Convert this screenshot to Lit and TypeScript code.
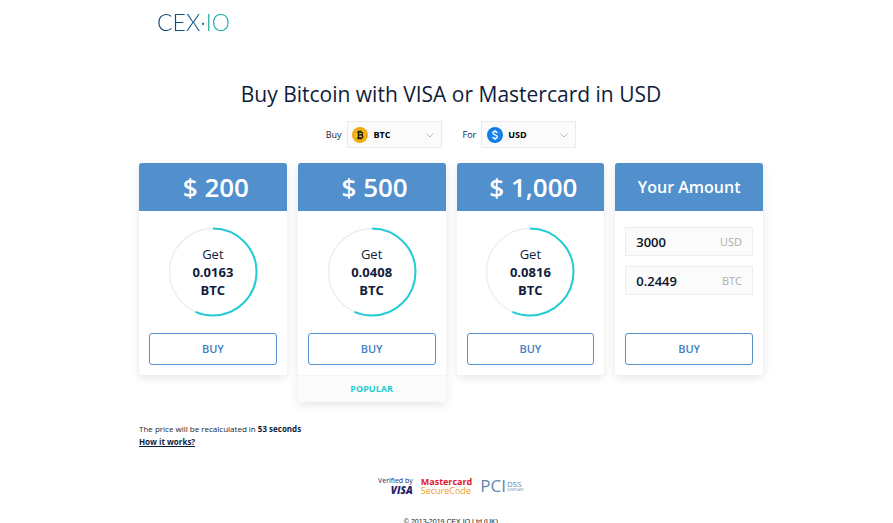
import { LitElement, html, css, svg } from "lit";
import { customElement, property, state } from "lit/decorators.js";

const RATE = 0.2449 / 3000;

@customElement("progress-ring")
class ProgressRing extends LitElement {
  @property({ type: Number }) value = 0;

  static styles = css`
    :host {
      display: grid;
      width: 90px;
      height: 90px;
    }
    .ring,
    .label {
      grid-area: 1 / 1;
    }
    .ring {
      width: 90px;
      height: 90px;
    }
    .track,
    .arc {
      fill: none;
    }
    .track {
      stroke: #ececec;
      stroke-width: 1.3;
    }
    .arc {
      stroke: #22ccd2;
      stroke-width: 2;
    }
    .label {
      align-self: center;
      text-align: center;
    }
  `;

  render() {
    return html`
      <svg class="ring" viewBox="0 0 90 90" aria-hidden="true">
        <circle class="track" cx="45" cy="45" r="43.5"></circle>
        <circle class="arc" cx="45" cy="45" r="43.5" pathLength="100"
          stroke-dasharray="${this.value} 100" transform="rotate(-90 45 45)"></circle>
      </svg>
      <div class="label"><slot></slot></div>
    `;
  }
}

@customElement("price-card")
class PriceCard extends LitElement {
  @property() heading = "";
  @property({ type: Boolean }) compact = false;
  @property({ type: Boolean }) popular = false;

  static styles = css`
    :host {
      display: block;
      border-radius: 3px;
      background: #fff;
      box-shadow: 0 3px 10px rgba(0, 0, 0, 0.1);
    }
    .head {
      display: flex;
      align-items: center;
      justify-content: center;
      height: 48px;
      margin: 0;
      padding-left: 6px;
      border-radius: 3px 3px 0 0;
      background: #5190cd;
      color: #fff;
      font-size: 26px;
      font-weight: 600;
    }
    .compact {
      padding-left: 0;
      font-size: 16px;
    }
    .body {
      display: flex;
      flex-direction: column;
      align-items: center;
      height: 122px;
      padding: 16px 10px 0;
      box-sizing: border-box;
    }
    .action {
      padding: 0 10px 10px;
    }
    .buy {
      width: 100%;
      height: 32px;
      padding: 0 0 1px;
      border: 1px solid #5190cd;
      border-radius: 3px;
      background: #fff;
      color: #4280c4;
      font: 600 11px "Open Sans", sans-serif;
      cursor: pointer;
    }
    .tag {
      border-top: 1px solid #f4f4f4;
      background: #fbfbfb;
      color: #1fced0;
      font-size: 9px;
      font-weight: 700;
      line-height: 26px;
      text-align: center;
    }
  `;

  render() {
    return html`
      <h2 class="head ${this.compact ? "compact" : ""}">${this.heading}</h2>
      <div class="body"><slot></slot></div>
      <div class="action"><button class="buy" type="button">BUY</button></div>
      ${this.popular ? html`<div class="tag">POPULAR</div>` : ""}
    `;
  }
}

const bitcoinIcon = svg`
  <circle cx="8" cy="8" r="8" fill="#f3b518"></circle>
  <circle cx="8" cy="8" r="6.8" fill="none" stroke="#dd9c0c" stroke-width=".7"></circle>
  <g fill="none" stroke="#161616" stroke-width="1.3">
    <path d="M5 5.1h3.7c2.4 0 2.4 2.8 0 2.8H6.5h2.4c2.6 0 2.6 3.1 0 3.1H5M6.5 5v6M7 3.6v1.5M9 3.6v1.5M7 11v1.5M9 11v1.5"></path>
  </g>`;

const dollarIcon = svg`
  <circle cx="8" cy="8" r="8" fill="#1682ee"></circle>
  <circle cx="8" cy="8" r="6.8" fill="none" stroke="#0b6fd8" stroke-width=".7"></circle>
  <path d="M10.2 6c-.3-1.1-1.2-1.5-2.2-1.5-1.2 0-2.1.6-2.1 1.6 0 2.4 4.4 1.2 4.4 3.7 0 1.1-1 1.7-2.3 1.7-1.2 0-2.1-.5-2.4-1.6M8 3v1.5M8 11.5V13"
    fill="none" stroke="#fff" stroke-width="1.3"></path>`;

@customElement("app-root")
class AppRoot extends LitElement {
  @state() private offers = [
    { price: "$ 200", amount: "0.0163", popular: false },
    { price: "$ 500", amount: "0.0408", popular: true },
    { price: "$ 1,000", amount: "0.0816", popular: false },
  ];
  @state() private usd = "3000";

  static styles = css`
    :host {
      display: block;
      height: 100vh;
      overflow: hidden;
      padding-left: 9px;
      box-sizing: border-box;
      background: #fff;
      color: #0f1d3c;
      font-family: "Open Sans", sans-serif;
    }
    .page {
      max-width: 624px;
      margin: 0 auto;
    }
    .header {
      padding: 7px 18px 0;
    }
    .logo {
      display: inline-block;
      background: linear-gradient(90deg, #0d3f70 0%, #14598a 55%, #0f9fa2 68%, #16b5a4 100%);
      background-clip: text;
      -webkit-background-clip: text;
      color: transparent;
      font: 300 23px/30px Lato, sans-serif;
      text-decoration: none;
    }
    .title {
      margin: 41px 0 0;
      font-size: 21px;
      font-weight: 400;
      line-height: 32px;
      text-align: center;
    }
    .pair {
      display: flex;
      justify-content: center;
      gap: 21px;
      margin-top: 11px;
    }
    .field {
      display: flex;
      align-items: center;
      gap: 5px;
      font-size: 9px;
    }
    .picker {
      display: grid;
      grid-template-columns: 27px 1fr 24px;
      align-items: center;
      width: 95px;
      height: 27px;
    }
    .picker > * {
      grid-row: 1;
    }
    .select {
      grid-column: 1 / -1;
      width: 100%;
      height: 100%;
      padding: 0 24px 0 26px;
      border: 1px solid #ebebeb;
      border-radius: 0;
      background: #fbfbfb;
      color: #000;
      font: 700 9px "Open Sans", sans-serif;
      appearance: none;
    }
    .coin {
      grid-column: 1;
      justify-self: center;
      width: 16px;
      height: 16px;
      z-index: 1;
      pointer-events: none;
    }
    .chevron {
      grid-column: 3;
      justify-self: center;
      width: 8px;
      height: 5px;
      margin-top: 2px;
      z-index: 1;
      fill: none;
      stroke: #b9b9b9;
      pointer-events: none;
    }
    .cards {
      display: grid;
      grid-template-columns: repeat(4, minmax(0, 1fr));
      align-items: start;
      gap: 11px;
      margin-top: 15px;
    }
    .get {
      font-size: 13px;
      line-height: 18px;
    }
    .amount {
      display: block;
      font-weight: 700;
    }
    .entry {
      display: flex;
      align-items: center;
      width: 100%;
      height: 29px;
      margin-bottom: 10px;
      padding: 0 10px;
      border: 1px solid #ededed;
      background: #fbfbfb;
      box-sizing: border-box;
    }
    .value {
      flex: 1;
      min-width: 0;
      padding: 0;
      border: 0;
      background: none;
      color: #0a1226;
      font: 600 13px "Open Sans", sans-serif;
    }
    .unit {
      color: #adadad;
      font-size: 11px;
    }
    .note {
      height: 72px;
      box-sizing: border-box;
      margin: 0;
      padding-top: 20px;
      font-size: 8px;
      line-height: 13px;
    }
    .how {
      color: inherit;
      font-weight: 700;
    }
    .badges {
      display: flex;
      align-items: center;
      justify-content: center;
      gap: 8px;
      height: 24px;
    }
    .visa {
      color: #1c1f6b;
      font: 400 7px/8px "Open Sans", sans-serif;
      text-align: right;
    }
    .visa-name {
      display: block;
      font: italic 800 10px/10px "Open Sans", sans-serif;
    }
    .mastercard {
      color: #e0152c;
      font: 700 9px/9px "Open Sans", sans-serif;
    }
    .secure {
      display: block;
      color: #f09a25;
      font-weight: 400;
    }
    .pci {
      display: flex;
      align-items: center;
      color: #6488ab;
      font: 400 17px/24px "Open Sans", sans-serif;
    }
    .dss {
      margin-left: 1px;
      font-size: 8px;
      line-height: 8px;
    }
    .compliant {
      display: block;
      font-size: 3px;
      line-height: 4px;
    }
    .copyright {
      margin: 19px 0 0;
      color: #111;
      font: 7px/10px "Liberation Sans", sans-serif;
      text-align: center;
    }
  `;

  private onUsd(e: Event) {
    this.usd = (e.target as HTMLInputElement).value;
  }

  private picker(id: string, label: string, icon: unknown, options: string[]) {
    return html`
      <div class="field">
        <label for=${id}>${label}</label>
        <div class="picker">
          <select class="select" id=${id}>
            ${options.map((o) => html`<option>${o}</option>`)}
          </select>
          <svg class="coin" viewBox="0 0 16 16" aria-hidden="true">${icon}</svg>
          <svg class="chevron" viewBox="0 0 8 5" aria-hidden="true"><path d="M.5.5 4 4 7.5.5"></path></svg>
        </div>
      </div>
    `;
  }

  render() {
    return html`
      <div class="page">
        <header class="header"><a class="logo" href="#">CEX·IO</a></header>
        <main>
          <h1 class="title">Buy Bitcoin with VISA or Mastercard in USD</h1>
          <div class="pair">
            ${this.picker("crypto", "Buy", bitcoinIcon, ["BTC", "ETH"])}
            ${this.picker("currency", "For", dollarIcon, ["USD", "EUR"])}
          </div>
          <section class="cards">
            ${this.offers.map(
              (o) => html`
                <price-card heading=${o.price} ?popular=${o.popular}>
                  <progress-ring value="56.6">
                    <div class="get">Get <b class="amount">${o.amount}</b><b class="amount">BTC</b></div>
                  </progress-ring>
                </price-card>
              `
            )}
            <price-card heading="Your Amount" compact>
              <label class="entry">
                <input class="value" .value=${this.usd} @input=${this.onUsd} />
                <span class="unit">USD</span>
              </label>
              <label class="entry">
                <input class="value" .value=${(Number(this.usd) * RATE).toFixed(4)} />
                <span class="unit">BTC</span>
              </label>
            </price-card>
          </section>
          <p class="note">
            The price will be recalculated in <b>53 seconds</b><br />
            <a class="how" href="#">How it works?</a>
          </p>
        </main>
        <footer>
          <div class="badges">
            <div class="visa">Verified by<span class="visa-name">VISA</span></div>
            <div class="mastercard">Mastercard<span class="secure">SecureCode</span></div>
            <div class="pci">PCI<span class="dss">DSS<span class="compliant">COMPLIANT</span></span></div>
          </div>
          <p class="copyright">© 2013-2019 CEX.IO Ltd (UK)</p>
        </footer>
      </div>
    `;
  }
}
